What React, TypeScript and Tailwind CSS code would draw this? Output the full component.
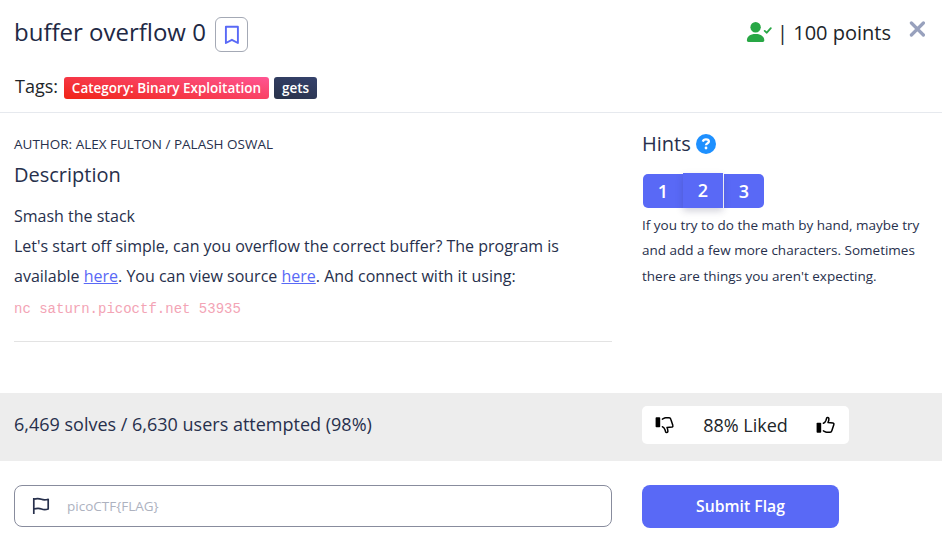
import React from "react";

function Thumb({ down = false }: { down?: boolean }) {
  return (
    <svg width="19" height="18" viewBox="0 0 19 18" fill="none" className={down ? "-scale-y-100" : "-ml-px mr-px"}>
      <rect x="0.6" y="6.8" width="4.6" height="10" rx="0.8" fill="#000" />
      <path
        d="M7.4 7.3C9 6.8 9.6 5.3 10 4.2L10.6 2.2C11.1 1.2 12.7 1.4 12.9 2.7C13 4 12.6 5.2 12 6.5L17 7C17.8 7.2 18.1 8 17.8 8.7L15.8 14.8C15.5 15.8 14.9 16.3 13.9 16.2H10.7C9.3 16.2 8.6 15.4 7.4 14.8"
        stroke="#000"
        strokeWidth="1.5"
        strokeLinecap="round"
        strokeLinejoin="round"
      />
    </svg>
  );
}

export default function App() {
  return (
    <main className="flex h-[544px] w-[942px] flex-col overflow-hidden bg-white font-['Open_Sans',sans-serif] text-[#27304c]">
      <header className="flex h-[113px] shrink-0 justify-between border-b border-[#e6e9ee] pl-[14px] pr-[17px]">
        <div className="flex flex-col">
          <div className="flex h-[52px] items-start pt-[17px]">
            <h1 className="-mt-[2px] w-[192px] whitespace-nowrap text-[24px] leading-[34px] text-[#212844]">buffer overflow 0</h1>
            <button className="ml-[9px] flex h-[35px] w-[33px] items-center justify-center rounded-[6px] border border-[#a4a9b5]">
              <svg width="16" height="20" viewBox="0 0 16 20" fill="none">
                <path d="M1.9 1.8H13.9V18L7.9 14.8L1.9 18Z" stroke="#5969f6" strokeWidth="1.9" strokeLinejoin="round" />
              </svg>
            </button>
          </div>
          <div className="mt-[24px] flex h-[23px] items-start">
            <span className="-mt-px ml-px w-[49px] text-[18px] leading-[22px] text-[#212529]">Tags:</span>
            <span className="mr-[5px] mt-px h-[22px] w-[205px] whitespace-nowrap rounded-[3px] bg-linear-[10deg,#f02415,#ff5593] text-center text-[13.5px] font-semibold leading-[22px] text-white">Category: Binary Exploitation</span>
            <span className="mt-px h-[22px] w-[43px] rounded-[3px] bg-linear-[15deg,#29324a,#35426c] text-center text-[13.5px] font-semibold leading-[22px] text-white">gets</span>
          </div>
        </div>
        <div className="flex items-start">
          <svg width="26" height="22" viewBox="0 0 26 22" className="mt-[21px]" fill="none">
            <circle cx="9.6" cy="6.3" r="5.2" fill="#28a745" />
            <path d="M0.9 19.3C0.9 15.6 4 12.9 9.6 12.9S18.3 15.6 18.3 19.3C18.3 20.5 17.8 21 16.7 21H2.5C1.4 21 0.9 20.5 0.9 19.3Z" fill="#28a745" />
            <path d="M18.7 9.9L20.8 11.7L24.8 7.2" stroke="#28a745" strokeWidth="1.8" strokeLinecap="round" strokeLinejoin="round" />
          </svg>
          <p className="ml-[5px] mt-[18px] whitespace-pre text-[20px] leading-[30px] text-[#212529]">| 100 points</p>
          <svg width="16" height="16" viewBox="0 0 16 16" className="ml-[18px] mt-[21px]" fill="none">
            <path d="M2.4 2L14.4 14M14.4 2L2.4 14" stroke="#98a1bd" strokeWidth="3.2" strokeLinecap="round" />
          </svg>
        </div>
      </header>

      <section className="flex h-[280px] shrink-0 pl-[14px]">
        <div className="h-[229px] w-[598px] border-b border-[#e3e3e3]">
          <p className="mt-[21px] text-[13.5px] leading-[20px]">AUTHOR: ALEX FULTON / PALASH OSWAL</p>
          <h2 className="mt-[6px] text-[20px] leading-[30px]">Description</h2>
          <p className="mt-[11px] text-[16px] leading-[30px]">Smash the stack</p>
          <p className="text-[16px] leading-[30px]">
            Let's start off simple, can you overflow the correct buffer? The program is<br />
            available <a className="text-[#5969f6] underline">here</a>. You can view source <a className="text-[#5969f6] underline">here</a>. And connect with it using:
          </p>
          <code className="block pt-[3px] font-['Liberation_Mono',monospace] text-[14px] leading-[30px] text-[#f3a4b5]">nc saturn.picoctf.net 53935</code>
        </div>
        <aside className="ml-[30px] w-[290px]">
          <div className="mt-[16px] flex h-[30px] items-center">
            <h2 className="w-[49px] text-[20px] leading-[30px]">Hints</h2>
            <span className="ml-[5px] flex h-[20px] w-[20px] items-center justify-center rounded-full bg-[#1e90ff]">
              <svg width="10" height="14" viewBox="0 0 10 14" fill="none">
                <path d="M1.8 4.6C2.2 3 3.4 2.4 5 2.4C6.7 2.4 7.9 3.2 7.9 4.6C7.9 6.3 5 6.2 5 8.3" stroke="#fff" strokeWidth="2.3" />
                <circle cx="5" cy="11" r="1.4" fill="#fff" />
              </svg>
            </span>
          </div>
          <div className="ml-px mt-[15px] flex h-[34px] text-[18px] font-semibold leading-[34px] text-white">
            <button className="h-[34px] w-[40px] rounded-l-[5px] bg-[#5969f6]">1</button>
            <button className="relative -mt-px h-[35px] w-[40px] bg-[#5969f6] pb-px leading-[33px] shadow-[0_3px_7px_rgba(50,50,93,0.22)]">2</button>
            <button className="ml-px h-[34px] w-[40px] rounded-r-[5px] bg-[#5969f6]">3</button>
          </div>
          <p className="mt-[5px] whitespace-nowrap text-[13.5px] leading-[25.3px]">
            If you try to do the math by hand, maybe try<br />
            and add a few more characters. Sometimes<br />
            there are things you aren't expecting.
          </p>
        </aside>
      </section>

      <section className="flex h-[68px] shrink-0 bg-[#ededed] pl-[14px]">
        <p className="mt-[16px] w-[628px] text-[18px] leading-[30px]">6,469 solves / 6,630 users attempted (98%)</p>
        <div className="mt-[13px] flex h-[38px] w-[207px] items-center justify-between rounded-[5px] bg-white px-[13px]">
          <Thumb down />
          <span className="text-[18px] leading-[30px] text-[#212529]">88% Liked</span>
          <Thumb />
        </div>
      </section>

      <form className="flex shrink-0 pl-[14px] pt-[24px]">
        <div className="flex h-[42px] w-[598px] items-center rounded-[8px] border border-[#888c9d] pl-[17px]">
          <svg width="18" height="18" viewBox="0 0 18 18" fill="none">
            <path d="M1.8 1V17M1.8 2.2C5.5 1 7.5 1.5 9.5 2.3C11.5 3.1 13.5 3 16.2 2.3V12C13.5 12.9 11.5 12.8 9.5 12C7.5 11.2 5.5 11 1.8 12" stroke="#27304c" strokeWidth="1.7" strokeLinejoin="round" />
          </svg>
          <input placeholder="picoCTF{FLAG}" className="ml-[17px] w-[450px] text-[13.5px] outline-none placeholder:text-[#adb2bf]" />
        </div>
        <button type="button" className="ml-[30px] h-[43px] w-[197px] rounded-[8px] bg-[#5969f6] text-[15.75px] font-semibold text-white">Submit Flag</button>
      </form>
    </main>
  );
}
